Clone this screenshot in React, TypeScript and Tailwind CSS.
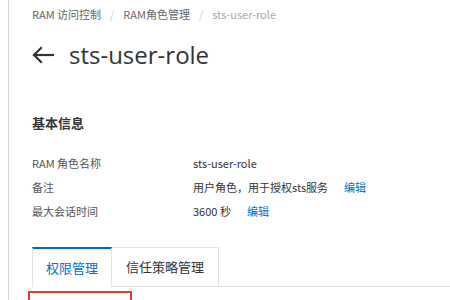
const cjk = "font-['Noto_Sans_CJK_SC',sans-serif]";

function Breadcrumb() {
  return (
    <div className={`flex items-center text-[11px] leading-4 text-[#666] ${cjk}`}>
      <span>RAM 访问控制</span>
      <span className="mx-[9px] text-[#ccc]">/</span>
      <span>RAM角色管理</span>
      <span className="mx-[9px] text-[#ccc]">/</span>
      <span className="text-[#aaa]">sts-user-role</span>
    </div>
  );
}

function BackArrow() {
  return (
    <svg width="22" height="18" viewBox="0 0 22 18" fill="none" stroke="#333" strokeWidth="2.2" strokeLinecap="square">
      <path d="M2 9h19" />
      <path d="M9 2 2 9l7 7" />
    </svg>
  );
}

function InfoRow({ label, children }: { label: string; children: React.ReactNode }) {
  return (
    <div className="flex h-6 items-center text-[11px]">
      <div className="w-[161px] text-[#555]">{label}</div>
      <div className="flex items-center text-[#333]">{children}</div>
    </div>
  );
}

function EditLink() {
  return <span className="ml-4 text-[#0070cc]">编辑</span>;
}

export default function App() {
  return (
    <div className="h-[300px] w-[450px] overflow-hidden bg-white">
      <div className={`ml-2 h-full border-l border-[#d6d6d6] pl-[23px] pt-[6px] ${cjk}`}>
        <Breadcrumb />

        <div className="mt-[17px] flex h-8 items-center">
          <BackArrow />
          <h1 className="ml-[15px] font-['Open_Sans',sans-serif] text-[24px] leading-8 text-[#333]">
            sts-user-role
          </h1>
        </div>

        <h2 className="mt-[42px] text-[13px] font-bold leading-5 text-[#333]">基本信息</h2>

        <div className="mt-[18px]">
          <InfoRow label="RAM 角色名称">sts-user-role</InfoRow>
          <InfoRow label="备注">
            用户角色，用于授权sts服务
            <EditLink />
          </InfoRow>
          <InfoRow label="最大会话时间">
            3600 秒
            <EditLink />
          </InfoRow>
        </div>

        <div className="mt-6 flex h-10 border-b border-[#e3e3e3] text-[13px]">
          <div className="-mb-px flex w-[80px] items-center justify-center border-x border-t-2 border-x-[#e3e3e3] border-t-[#0070cc] bg-white text-[#0070cc]">
            权限管理
          </div>
          <div className="flex w-[107px] items-center justify-center border-r border-t border-[#e3e3e3] text-[#333]">
            信任策略管理
          </div>
        </div>

        <div className="ml-[-4px] mt-1 h-[30px] w-[104px] border-2 border-[#e53935]" />
      </div>
    </div>
  );
}
